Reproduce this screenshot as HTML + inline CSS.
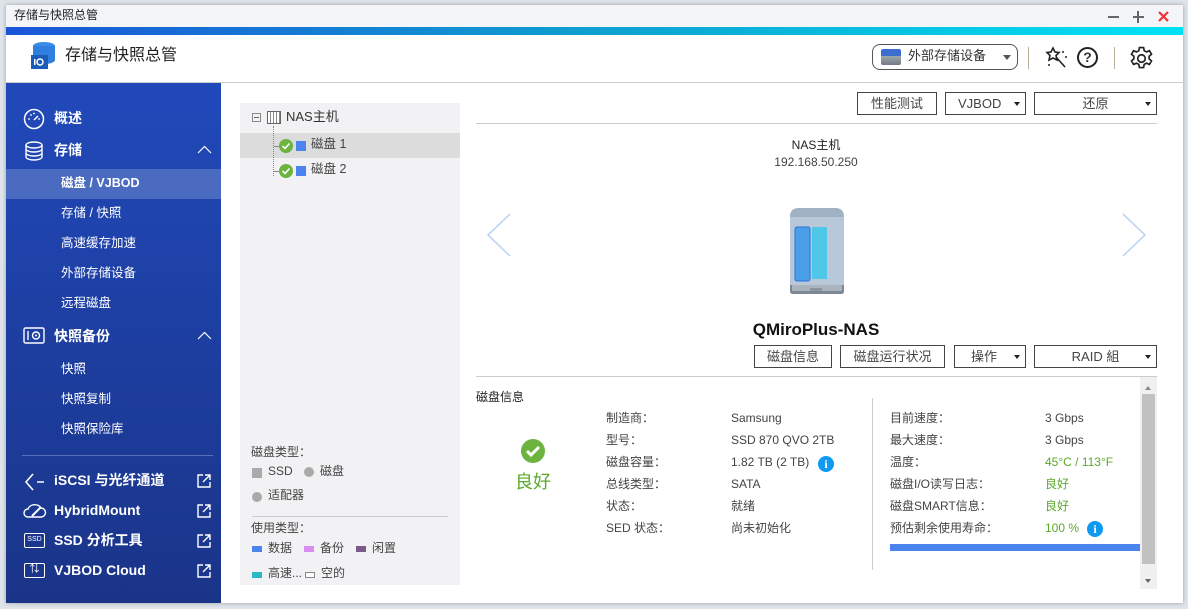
<!DOCTYPE html>
<html><head><meta charset="utf-8"><style>
*{margin:0;padding:0;box-sizing:border-box}
body{width:1188px;height:609px;overflow:hidden;background:#dfe3ea;font-family:"Liberation Sans","Noto Sans CJK SC",sans-serif;color:#333;position:relative;font-size:12px;line-height:1.2}
.a{position:absolute;white-space:nowrap}
.win{position:absolute;left:6px;top:5px;width:1177px;height:598px;background:#fff;box-shadow:0 0 4px rgba(0,0,0,.3)}
.sb{position:absolute;left:6px;top:83px;width:215px;height:520px;background:linear-gradient(#2149ba,#1a3488)}
.sb .t{position:absolute;color:#fff;font-weight:bold;font-size:14px}
.sb .s{position:absolute;left:55px;color:#fff;font-size:12.5px}
.btn{position:absolute;border:1px solid #444;background:#fff;font-size:13px;color:#444;text-align:center;height:23px;line-height:21px}
.arr{position:absolute;right:5px;top:9px;border:3px solid transparent;border-top:4px solid #222}
.lbl{position:absolute;font-size:12px;color:#444}
.g{color:#5aaa2a}
.info{position:absolute;width:16px;height:16px;border-radius:50%;background:#0d9af0;color:#fff;font-weight:bold;font-size:12px;text-align:center;line-height:16px;font-family:"Liberation Serif",serif}
</style></head><body>
<div class="win"></div>
<div class="a" style="left:6px;top:5px;width:1177px;height:22px;background:#f3f5f8"></div>
<div class="a" style="left:14px;top:8px;font-size:12px;color:#222">存储与快照总管</div>
<div class="a" style="left:1108px;top:16px;width:11px;height:2px;background:#666"></div>
<div class="a" style="left:1133px;top:16px;width:11px;height:2px;background:#666"></div>
<div class="a" style="left:1137px;top:11px;width:2px;height:12px;background:#666"></div>
<svg class="a" style="left:1158px;top:11px" width="11" height="11"><path d="M1 1L10 10M10 1L1 10" stroke="#e33" stroke-width="2.2"/></svg>
<div class="a" style="left:6px;top:27px;width:1177px;height:8px;background:linear-gradient(90deg,#1a55d8,#0fa0d0 50%,#00e2f4)"></div>
<!-- header -->
<svg class="a" style="left:29px;top:41px" width="30" height="30" viewBox="0 0 30 30"><ellipse cx="15" cy="5" rx="11" ry="4" fill="#3a8de8"/><rect x="4" y="5" width="22" height="14" fill="#2f7fe0"/><ellipse cx="15" cy="19" rx="11" ry="4" fill="#2f7fe0"/><rect x="2" y="14" width="17" height="14" fill="#1a5cb8"/><circle cx="11" cy="21" r="3" fill="none" stroke="#fff" stroke-width="1.5"/><rect x="5" y="18" width="1.5" height="6" fill="#fff"/></svg>
<div class="a" style="left:65px;top:46px;font-size:16px;color:#222">存储与快照总管</div>
<div class="a" style="left:872px;top:44px;width:146px;height:26px;border:1px solid #555;border-radius:8px"></div>
<div class="a" style="left:881px;top:49px;width:20px;height:16px;background:linear-gradient(#3a6fd0 45%,#9aa 45%,#778);border-radius:2px"></div>
<div class="a" style="left:908px;top:48px;font-size:13px;color:#333">外部存储设备</div>
<div class="a" style="left:1003px;top:55px;border:4px solid transparent;border-top:5px solid #555"></div>
<div class="a" style="left:1028px;top:47px;width:1px;height:22px;background:#b8b09a"></div>
<svg class="a" style="left:1045px;top:46px" width="24" height="24" viewBox="0 0 24 24"><g fill="none" stroke="#222" stroke-width="1.6"><path d="M8 2l2 4 4 .5-3 3 1 4.5-4-2-4 2 1-4.5-3-3 4-.5z"/><path d="M11 11l9 10"/></g><circle cx="18" cy="6" r="1" fill="#222"/><circle cx="21" cy="11" r="1" fill="#222"/><circle cx="4" cy="19" r="1" fill="#222"/></svg>
<div class="a" style="left:1077px;top:47px;width:21px;height:21px;border:2px solid #222;border-radius:50%;text-align:center;font-weight:bold;font-size:14px;line-height:17px">?</div>
<div class="a" style="left:1114px;top:47px;width:1px;height:22px;background:#b8b09a"></div>
<svg class="a" style="left:1129px;top:46px" width="25" height="25" viewBox="0 0 24 24"><path fill="none" stroke="#222" stroke-width="1.6" d="M10 1.5h4l.6 3 2.2 1.2 2.8-1.2 2 3.4-2.3 2v2.4l2.3 2-2 3.4-2.8-1.2-2.2 1.2-.6 3h-4l-.6-3-2.2-1.2-2.8 1.2-2-3.4 2.3-2v-2.4l-2.3-2 2-3.4 2.8 1.2 2.2-1.2z"/><circle cx="12" cy="12" r="3.6" fill="none" stroke="#222" stroke-width="1.6"/></svg>
<div class="a" style="left:6px;top:82px;width:1177px;height:1px;background:#ccc"></div>
<!-- sidebar -->
<div class="sb">
<svg class="a" style="left:17px;top:25px" width="22" height="22"><circle cx="11" cy="11" r="9.5" fill="none" stroke="#fff" stroke-width="1.5"/><line x1="11" y1="12" x2="15" y2="8" stroke="#fff" stroke-width="1.5"/><g fill="#fff"><circle cx="6" cy="11" r=".9"/><circle cx="8" cy="7" r=".9"/><circle cx="11" cy="5.5" r=".9"/><circle cx="16" cy="11" r=".9"/></g></svg>
<div class="t" style="left:48px;top:27px">概述</div>
<svg class="a" style="left:18px;top:58px" width="20" height="20"><g fill="none" stroke="#fff" stroke-width="1.4"><ellipse cx="10" cy="4" rx="8" ry="3"/><path d="M2 4v12c0 1.6 3.6 3 8 3s8-1.4 8-3V4M2 8c0 1.6 3.6 3 8 3s8-1.4 8-3M2 12c0 1.6 3.6 3 8 3s8-1.4 8-3"/></g></svg>
<div class="t" style="left:48px;top:59px">存储</div>
<svg class="a" style="left:191px;top:62px" width="15" height="9"><path d="M1 8L7.5 1.5 14 8" fill="none" stroke="#fff" stroke-width="1.2"/></svg>
<div class="a" style="left:0;top:86px;width:215px;height:30px;background:#4a6bc0"></div>
<div class="s" style="top:93px;font-weight:bold">磁盘 / VJBOD</div>
<div class="s" style="top:123px">存储 / 快照</div>
<div class="s" style="top:153px">高速缓存加速</div>
<div class="s" style="top:183px">外部存储设备</div>
<div class="s" style="top:213px">远程磁盘</div>
<svg class="a" style="left:17px;top:244px" width="22" height="17"><rect x="1" y="1" width="20" height="15" rx="1.5" fill="none" stroke="#fff" stroke-width="1.4"/><line x1="5" y1="4" x2="5" y2="13" stroke="#fff" stroke-width="1.4"/><circle cx="13" cy="8.5" r="3.5" fill="none" stroke="#fff" stroke-width="1.4"/><circle cx="13" cy="8.5" r="1" fill="#fff"/></svg>
<div class="t" style="left:48px;top:245px">快照备份</div>
<svg class="a" style="left:191px;top:248px" width="15" height="9"><path d="M1 8L7.5 1.5 14 8" fill="none" stroke="#fff" stroke-width="1.2"/></svg>
<div class="s" style="top:279px">快照</div>
<div class="s" style="top:309px">快照复制</div>
<div class="s" style="top:339px">快照保险库</div>
<div class="a" style="left:16px;top:372px;width:191px;height:1px;background:#5670b8"></div>
<svg class="a" style="left:18px;top:389px" width="22" height="20"><path d="M9 2L2 10l7 8M13 10h7" fill="none" stroke="#fff" stroke-width="1.6"/></svg>
<div class="t" style="left:48px;top:389px">iSCSI 与光纤通道</div>
<svg class="a" style="left:17px;top:418px" width="24" height="18"><path d="M5 16a4 4 0 010-8 7 6 0 0113-1 4.5 4.5 0 010 9z" fill="none" stroke="#fff" stroke-width="1.4"/><path d="M9 15l9-9" stroke="#fff" stroke-width="2"/></svg>
<div class="t" style="left:48px;top:419px">HybridMount</div>
<div class="a" style="left:18px;top:450px;width:21px;height:15px;border:1.4px solid #fff;border-radius:2px;color:#fff;font-size:7px;text-align:center;line-height:11px">SSD</div>
<div class="t" style="left:48px;top:449px">SSD 分析工具</div>
<div class="a" style="left:18px;top:480px;width:21px;height:15px;border:1.4px solid #fff;border-radius:2px;color:#fff;font-size:10px;text-align:center;line-height:11px">⇅</div>
<div class="t" style="left:48px;top:479px">VJBOD Cloud</div>
<svg class="a" style="left:190px;top:390px" width="16" height="16"><path d="M7 2H2v12h12V9M9 2h5v5M14 2L7 9" fill="none" stroke="#fff" stroke-width="1.4"/></svg>
<svg class="a" style="left:190px;top:420px" width="16" height="16"><path d="M7 2H2v12h12V9M9 2h5v5M14 2L7 9" fill="none" stroke="#fff" stroke-width="1.4"/></svg>
<svg class="a" style="left:190px;top:450px" width="16" height="16"><path d="M7 2H2v12h12V9M9 2h5v5M14 2L7 9" fill="none" stroke="#fff" stroke-width="1.4"/></svg>
<svg class="a" style="left:190px;top:480px" width="16" height="16"><path d="M7 2H2v12h12V9M9 2h5v5M14 2L7 9" fill="none" stroke="#fff" stroke-width="1.4"/></svg>
</div>
<!-- tree panel -->
<div class="a" style="left:240px;top:103px;width:220px;height:482px;background:#f2f2f4"></div>
<div class="a" style="left:240px;top:133px;width:220px;height:25px;background:#dcdcdc"></div>
<div class="a" style="left:252px;top:113px;width:9px;height:9px;border:1px solid #888"></div>
<div class="a" style="left:254px;top:117px;width:5px;height:1px;background:#666"></div>
<div class="a" style="left:267px;top:111px;width:14px;height:13px;border:1px solid #666;background:repeating-linear-gradient(90deg,#fff 0 2px,#888 2px 3px)"></div>
<div class="a" style="left:286px;top:109px;font-size:13px;color:#333">NAS主机</div>
<div class="a" style="left:273px;top:126px;width:1px;height:50px;border-left:1px dotted #888"></div>
<div class="a" style="left:274px;top:146px;width:5px;height:1px;background:#888"></div>
<div class="a" style="left:274px;top:171px;width:5px;height:1px;background:#888"></div>
<svg class="a" style="left:279px;top:139px" width="14" height="14"><circle cx="7" cy="7" r="7" fill="#6cb33f"/><path d="M3.5 7l2.5 2.5 4.5-5" fill="none" stroke="#fff" stroke-width="1.6"/></svg>
<div class="a" style="left:296px;top:141px;width:10px;height:10px;background:#4a84ec"></div>
<div class="a" style="left:311px;top:137px;font-size:12.5px;color:#444">磁盘 1</div>
<svg class="a" style="left:279px;top:164px" width="14" height="14"><circle cx="7" cy="7" r="7" fill="#6cb33f"/><path d="M3.5 7l2.5 2.5 4.5-5" fill="none" stroke="#fff" stroke-width="1.6"/></svg>
<div class="a" style="left:296px;top:166px;width:10px;height:10px;background:#4a84ec"></div>
<div class="a" style="left:311px;top:162px;font-size:12.5px;color:#444">磁盘 2</div>
<div class="lbl" style="left:251px;top:445px">磁盘类型：</div>
<div class="a" style="left:252px;top:468px;width:10px;height:10px;background:#aaa"></div>
<div class="lbl" style="left:268px;top:464px">SSD</div>
<div class="a" style="left:304px;top:467px;width:10px;height:10px;border-radius:50%;background:#aaa"></div>
<div class="lbl" style="left:320px;top:464px">磁盘</div>
<div class="a" style="left:252px;top:492px;width:10px;height:10px;border-radius:50%;background:#aaa"></div>
<div class="lbl" style="left:268px;top:488px">适配器</div>
<div class="a" style="left:252px;top:516px;width:196px;height:1px;background:#ccc"></div>
<div class="lbl" style="left:251px;top:521px">使用类型：</div>
<div class="a" style="left:252px;top:546px;width:10px;height:6px;background:#4a84ec"></div><div class="lbl" style="left:268px;top:541px">数据</div>
<div class="a" style="left:304px;top:546px;width:10px;height:6px;background:#d88ef0"></div><div class="lbl" style="left:320px;top:541px">备份</div>
<div class="a" style="left:356px;top:546px;width:10px;height:6px;background:#7a5a8a"></div><div class="lbl" style="left:372px;top:541px">闲置</div>
<div class="a" style="left:252px;top:572px;width:10px;height:6px;background:#2ab8c8"></div><div class="lbl" style="left:268px;top:566px">高速...</div>
<div class="a" style="left:305px;top:572px;width:10px;height:6px;border:1px solid #888;background:#fff"></div><div class="lbl" style="left:321px;top:566px">空的</div>
<!-- main top -->
<div class="btn" style="left:857px;top:92px;width:80px">性能测试</div>
<div class="btn" style="left:945px;top:92px;width:81px;text-align:left;padding-left:12px">VJBOD<span class="arr"></span></div>
<div class="btn" style="left:1034px;top:92px;width:123px">还原<span class="arr"></span></div>
<div class="a" style="left:476px;top:123px;width:681px;height:1px;background:#ccc"></div>
<div class="a" style="left:716px;top:138px;width:200px;text-align:center;font-size:12px;color:#222">NAS主机</div>
<div class="a" style="left:716px;top:155px;width:200px;text-align:center;font-size:12px;color:#444">192.168.50.250</div>
<svg class="a" style="left:485px;top:213px" width="28" height="44"><path d="M25 1L3 22l22 21" fill="none" stroke="#bcd4f4" stroke-width="1.6"/></svg>
<svg class="a" style="left:1120px;top:213px" width="28" height="44"><path d="M3 1l22 21L3 43" fill="none" stroke="#bcd4f4" stroke-width="1.6"/></svg>
<svg class="a" style="left:786px;top:205px" width="62" height="92" viewBox="0 0 62 92"><path d="M4 84V12Q4 3 13 3H49Q58 3 58 12V84Z" fill="#b8c8d8"/><path d="M4 12Q4 3 13 3H49Q58 3 58 12Z" fill="#a0b2c4"/><path d="M4 80H58V86Q58 89 55 89H7Q4 89 4 86Z" fill="#7c8894"/><rect x="6" y="80" width="50" height="6" fill="#aab4be"/><rect x="9" y="22" width="15" height="54" rx="2" fill="#4aa0e8" stroke="#3070e0"/><rect x="26" y="22" width="15" height="52" fill="#4ec8e8"/><rect x="24" y="83" width="12" height="3" fill="#8a96a2"/></svg>
<div class="a" style="left:716px;top:320px;width:200px;text-align:center;font-size:17px;font-weight:bold;color:#111">QMiroPlus-NAS</div>
<div class="btn" style="left:754px;top:345px;width:78px">磁盘信息</div>
<div class="btn" style="left:840px;top:345px;width:105px">磁盘运行状况</div>
<div class="btn" style="left:954px;top:345px;width:72px;text-align:left;padding-left:16px">操作<span class="arr"></span></div>
<div class="btn" style="left:1034px;top:345px;width:123px">RAID 組<span class="arr"></span></div>
<div class="a" style="left:476px;top:376px;width:681px;height:1px;background:#ccc"></div>
<!-- info -->
<div class="lbl" style="left:476px;top:390px;color:#222">磁盘信息</div>
<svg class="a" style="left:521px;top:439px" width="24" height="24"><circle cx="12" cy="12" r="12" fill="#6cb33f"/><path d="M6 12l4 4 8-8" fill="none" stroke="#fff" stroke-width="3"/></svg>
<div class="a g" style="left:515px;top:472px;font-size:18px">良好</div>
<div class="lbl" style="left:606px;top:411px">制造商：</div><div class="lbl" style="left:731px;top:411px">Samsung</div>
<div class="lbl" style="left:606px;top:433px">型号：</div><div class="lbl" style="left:731px;top:433px">SSD 870 QVO 2TB</div>
<div class="lbl" style="left:606px;top:455px">磁盘容量：</div><div class="lbl" style="left:731px;top:455px">1.82 TB (2 TB)</div>
<div class="info" style="left:818px;top:456px">i</div>
<div class="lbl" style="left:606px;top:477px">总线类型：</div><div class="lbl" style="left:731px;top:477px">SATA</div>
<div class="lbl" style="left:606px;top:499px">状态：</div><div class="lbl" style="left:731px;top:499px">就绪</div>
<div class="lbl" style="left:606px;top:521px">SED 状态：</div><div class="lbl" style="left:731px;top:521px">尚未初始化</div>
<div class="a" style="left:872px;top:398px;width:1px;height:172px;background:#ccc"></div>
<div class="lbl" style="left:890px;top:411px">目前速度：</div><div class="lbl" style="left:1045px;top:411px">3 Gbps</div>
<div class="lbl" style="left:890px;top:433px">最大速度：</div><div class="lbl" style="left:1045px;top:433px">3 Gbps</div>
<div class="lbl" style="left:890px;top:455px">温度：</div><div class="lbl g" style="left:1045px;top:455px">45°C / 113°F</div>
<div class="lbl" style="left:890px;top:477px">磁盘I/O读写日志：</div><div class="lbl g" style="left:1045px;top:477px">良好</div>
<div class="lbl" style="left:890px;top:499px">磁盘SMART信息：</div><div class="lbl g" style="left:1045px;top:499px">良好</div>
<div class="lbl" style="left:890px;top:521px">预估剩余使用寿命：</div><div class="lbl g" style="left:1045px;top:521px">100 %</div>
<div class="info" style="left:1087px;top:521px">i</div>
<div class="a" style="left:890px;top:544px;width:250px;height:7px;background:#4a84ec"></div>
<div class="a" style="left:1140px;top:377px;width:17px;height:212px;background:#f0f0f0"></div>
<div class="a" style="left:1142px;top:394px;width:13px;height:170px;background:#c1c1c1"></div>
<div class="a" style="left:1145px;top:383px;border:3.5px solid transparent;border-bottom:4px solid #888"></div>
<div class="a" style="left:1145px;top:579px;border:3.5px solid transparent;border-top:4px solid #666"></div>
</body></html>
